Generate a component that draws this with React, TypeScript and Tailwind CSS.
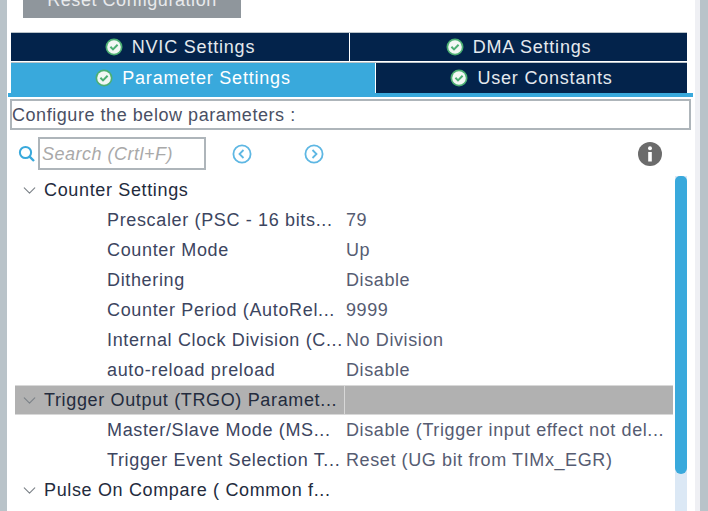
import { ChevronDown } from 'lucide-react'

const font = { fontFamily: '"Liberation Sans", Arial, sans-serif' }

type Row = { label: string; value?: string; group?: boolean; active?: boolean }

const rows: Row[] = [
  { label: 'Counter Settings', group: true },
  { label: 'Prescaler (PSC - 16 bits...', value: '79' },
  { label: 'Counter Mode', value: 'Up' },
  { label: 'Dithering', value: 'Disable' },
  { label: 'Counter Period (AutoRel...', value: '9999' },
  { label: 'Internal Clock Division (C...', value: 'No Division' },
  { label: 'auto-reload preload', value: 'Disable' },
  { label: 'Trigger Output (TRGO) Paramet...', group: true, active: true },
  { label: 'Master/Slave Mode (MS...', value: 'Disable (Trigger input effect not del...' },
  { label: 'Trigger Event Selection T...', value: 'Reset (UG bit from TIMx_EGR)' },
  { label: 'Pulse On Compare ( Common f...', group: true },
]

function CheckBadge() {
  return (
    <svg width="18" height="18" viewBox="0 0 18 18" className="shrink-0">
      <circle cx="9" cy="9" r="8.5" fill="#4caf73" />
      <circle cx="9" cy="9" r="6.8" fill="#f2f7f4" />
      <path d="M5.4 8.8 L8 11.4 L12.6 6.8" fill="none" stroke="#4caf73" strokeWidth="2" />
    </svg>
  )
}

function Tab({ label, width, active }: { label: string; width: string; active?: boolean }) {
  return (
    <div
      className={`flex h-full items-center justify-center gap-[9px] text-[18px] tracking-[0.8px] ${width} ${
        active ? 'bg-[#39a9dc] text-white' : 'bg-[#03234b] text-[#e4e9ee]'
      }`}
    >
      <CheckBadge />
      <span>{label}</span>
    </div>
  )
}

function Circle({ dir }: { dir: 'left' | 'right' }) {
  return (
    <svg width="20" height="20" viewBox="0 0 20 20">
      <circle cx="10" cy="10" r="8.6" fill="none" stroke="#5eb7e3" strokeWidth="1.8" />
      <path
        d={dir === 'left' ? 'M11.5 6 L7.5 10 L11.5 14' : 'M8.5 6 L12.5 10 L8.5 14'}
        fill="none"
        stroke="#5eb7e3"
        strokeWidth="1.8"
      />
    </svg>
  )
}

function TreeRow({ row }: { row: Row }) {
  return (
    <div className={`flex h-[30px] items-center text-[18px] ${row.active ? 'border-y border-[#d8d8d8] bg-[#b1b1b1]' : ''}`}>
      <div
        className={`flex h-full w-[329px] shrink-0 items-center overflow-hidden whitespace-nowrap ${
          row.group ? 'text-[#232b3d]' : 'pl-[92px] text-[#3c4560]'
        }`}
      >
        {row.group && <ChevronDown className="mx-[4px] w-[21px] shrink-0 text-[#7c8288]" size={21} strokeWidth={1.3} />}
        <span className="tracking-[0.65px]">{row.label}</span>
      </div>
      <div className={`h-full w-px shrink-0 ${row.active ? 'bg-[#d8d8d8]' : ''}`} />
      <div className="flex-1 overflow-hidden whitespace-nowrap pl-[1px] tracking-[0.6px] text-[#565c72]">{row.value}</div>
    </div>
  )
}

export default function App() {
  return (
    <div className="flex h-[511px] w-[708px] overflow-hidden bg-white" style={font}>
      <div className="w-[7px] shrink-0 bg-[#b9c3c9]" />
      <div className="flex min-w-0 flex-1 flex-col">
        <div className="h-[32px] shrink-0 pl-[16px]">
          <div className="mt-[-18px] flex h-[36px] w-[218px] items-center justify-center bg-[#8f969c] text-[18px] tracking-[0.55px] text-[#e8eaec]">
            Reset Configuration
          </div>
        </div>

        <div className="ml-[4px] flex h-[29px] w-[676px] shrink-0 gap-px border-t border-[#b9c3c9]">
          <Tab label="NVIC Settings" width="w-[338px]" />
          <Tab label="DMA Settings" width="w-[337px]" />
        </div>
        <div className="ml-[4px] mt-px flex h-[31px] w-[676px] shrink-0 gap-px border-t border-[#b9c3c9]">
          <Tab label="Parameter Settings" width="w-[364px]" active />
          <Tab label="User Constants" width="w-[311px]" />
        </div>
        <div className="ml-px h-[4px] w-[685px] shrink-0 bg-[#39a9dc]" />

        <div className="ml-[3px] mt-[2px] flex h-[31px] w-[681px] shrink-0 items-center border-2 border-[#aeb5ba] pt-[2px] text-[18px] tracking-[0.55px] text-[#4a5064]">
          Configure the below parameters :
        </div>

        <div className="flex h-[45px] shrink-0 items-center pt-[2px]">
          <svg width="18" height="18" viewBox="0 0 18 18" className="ml-[11px] shrink-0">
            <circle cx="7.5" cy="7.5" r="5.6" fill="none" stroke="#39a9dc" strokeWidth="2" />
            <path d="M11.6 11.6 L16 16" stroke="#39a9dc" strokeWidth="2.4" />
          </svg>
          <div className="ml-[2px] flex h-[33px] w-[168px] shrink-0 items-center border-2 border-[#aeb5ba] pl-[2px] pt-[2px] text-[18px] italic tracking-[0.5px] text-[#a9a9a9]">
            Search (Crtl+F)
          </div>
          <div className="ml-[26px]"><Circle dir="left" /></div>
          <div className="ml-[52px]"><Circle dir="right" /></div>
          <svg width="24" height="24" viewBox="0 0 24 24" className="ml-[314px] shrink-0">
            <circle cx="12" cy="12" r="12" fill="#6b6b6b" />
            <circle cx="12" cy="6.2" r="2" fill="#fff" />
            <rect x="10.2" y="10" width="3.6" height="9.5" fill="#fff" />
          </svg>
        </div>

        <div className="flex min-h-0 flex-1">
          <div className="ml-[8px] mr-[2px] w-[658px] shrink-0">
            {rows.map((row) => (
              <TreeRow key={row.label} row={row} />
            ))}
          </div>
          <div className="mt-px w-[12px] shrink-0 bg-[#dbe8f5]">
            <div className="h-[298px] rounded-b-[6px] rounded-t-[5px] bg-[#39a9dc]" />
          </div>
          <div className="w-[8px] shrink-0 bg-white" />
        </div>
      </div>
      <div className="w-[5px] shrink-0 bg-[#eff0f4]" />
      <div className="w-[8px] shrink-0 bg-[#b9c3c9]" />
    </div>
  )
}
